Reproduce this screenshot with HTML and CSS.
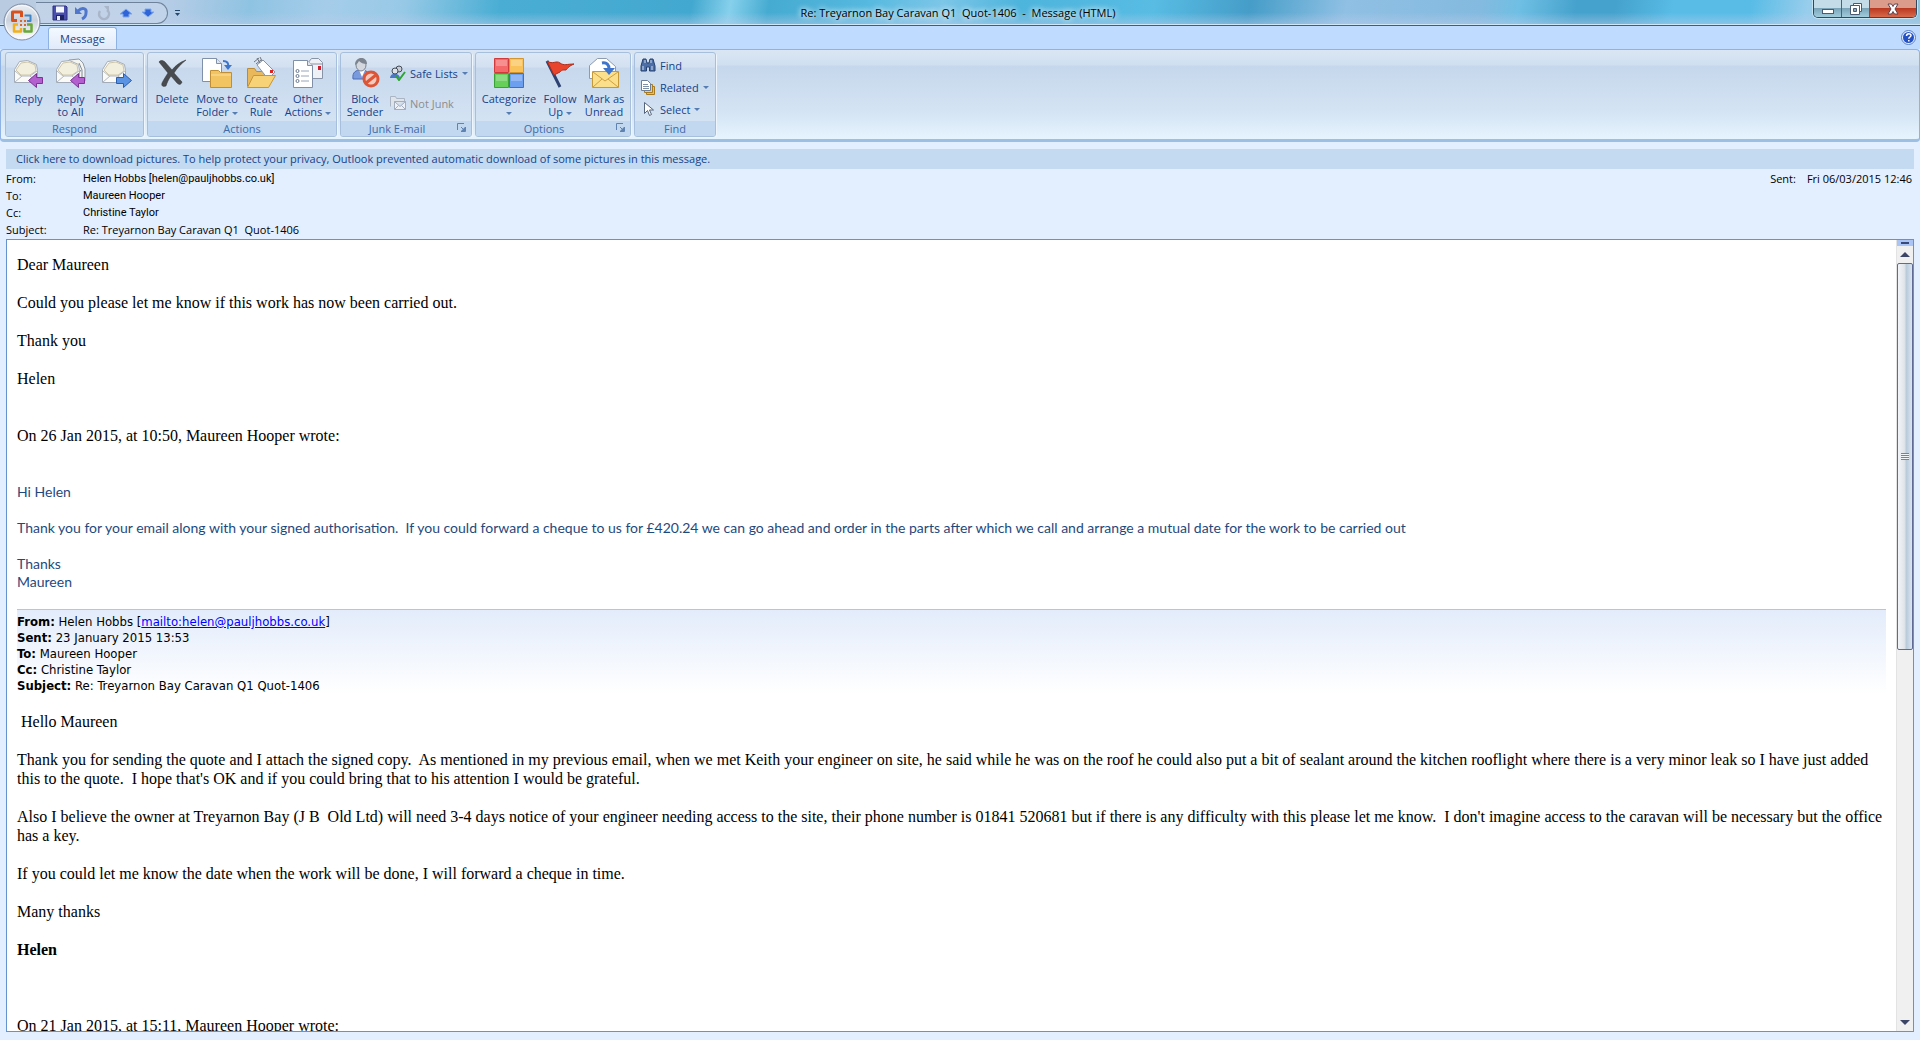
FILE: index.html
```html
<!DOCTYPE html>
<html lang="en">

	<head>
		<meta charset="UTF-8">
		<title>Re: Treyarnon Bay Caravan Q1 Quot-1406 - Message (HTML)</title>
		<link rel="stylesheet" href="styles.css">
	</head>

	<body>
		<header class="titlebar">
			<div class="quick">
				<button aria-label="Save"><svg width="16" height="16" viewBox="0 0 16 16"><path d="M1 1h13l1 1v13H1z" fill="#4a4fae" stroke="#2d3180"/><path d="M4 1.500h8v6H4z" fill="#f4f7ff"/><path d="M4 10h8v5H4z" fill="#1f2460"/><path d="M5 11h3v4H5z" fill="#e6eaff"/></svg></button>
				<button aria-label="Undo"><svg width="16" height="16" viewBox="0 0 16 16"><path d="M4 6c4-4 9-3 8 2 0 3-2 5-4 6" fill="none" stroke="#4f76cc" stroke-width="3"/><path d="M1 2v7h7z" fill="#4f76cc"/></svg></button>
				<button aria-label="Redo" disabled><svg width="16" height="16" viewBox="0 0 16 16"><path d="M11 5a5 5 0 1 1-7 1" fill="none" stroke="#a9b5c8" stroke-width="2.500"/><path d="M8 1h5v6z" fill="#a9b5c8"/></svg></button>
				<button aria-label="Previous Item"><svg width="16" height="16" viewBox="0 0 16 16"><path d="M8 4l6 5h-3v3H5V9H2z" fill="#2f63d8" stroke="#7ea8ee"/></svg></button>
				<button aria-label="Next Item"><svg width="16" height="16" viewBox="0 0 16 16"><path d="M8 12l6-5h-3V4H5v3H2z" fill="#2f63d8" stroke="#7ea8ee"/></svg></button>
			</div>
			<button class="customize" aria-label="Customize Quick Access Toolbar"><svg width="7" height="8" viewBox="0 0 7 8"><path d="M1 1.500h5" stroke="#25476e"/><path d="M1 4h5L3.500 7z" fill="#25476e"/></svg></button>
			<h1>Re: Treyarnon Bay Caravan Q1&nbsp; Quot-1406 &nbsp;-&nbsp; Message (HTML)</h1>
			<div class="window-btns">
				<button aria-label="Minimize"><svg width="14" height="14" viewBox="0 0 14 14"><rect x="1.500" y="7.500" width="11" height="4" fill="#fff" stroke="#4a5a70"/></svg></button>
				<button aria-label="Restore"><svg width="14" height="14" viewBox="0 0 14 14"><path d="M4.500 1.500h8v8h-8z" fill="#fff" stroke="#4a5a70"/><path d="M1.500 3.500h9v9h-9z" fill="#fff" stroke="#4a5a70"/><path d="M4.500 6.500h3v3h-3z" fill="#8fa9bd" stroke="#4a5a70"/></svg></button>
				<button class="close" aria-label="Close"><svg width="14" height="14" viewBox="0 0 14 14"><path d="M2 2h3.500L7 4.500 8.500 2H12L9 7l3 5H8.500L7 9.500 5.500 12H2l3-5z" fill="#fff" stroke="#5b4450"/></svg></button>
			</div>
			<button class="office" aria-label="Office Button"><svg width="38" height="38" viewBox="0 0 38 38">
				<defs>
					<linearGradient id="orb" x1="0" y1="0" x2="0" y2="1"><stop offset="0" stop-color="#eef1f5"/><stop offset=".45" stop-color="#c9d1dd"/><stop offset=".55" stop-color="#d5dbe4"/><stop offset="1" stop-color="#fff"/></linearGradient>
				</defs>
				<circle cx="19" cy="19" r="18" fill="url(#orb)" stroke="#7d8ba3"/>
				<circle cx="19" cy="19" r="16.500" fill="none" stroke="#f7f9fc"/>
				<g fill="none" stroke-width="3" stroke-linejoin="round">
					<path d="M14 17.500H9.500v-8.500h9v5" stroke="#d8501c"/>
					<path d="M21.500 12.500h6v5.500H24" stroke="#3f86c8" stroke-width="2"/>
					<path d="M18 25v3.500H11V21.500h4" stroke="#f2b01e" stroke-width="2.500"/>
					<path d="M21.500 25v3.500h7v-7H24" stroke="#6aa83a" stroke-width="2.500"/>
				</g>
				<path d="M17 17h2v2h-2zM21 17h2v2h-2zM17 21h2v2h-2zM21 21h2v2h-2z" fill="#d46a2c"/>
			</svg></button>
		</header>

		<nav class="tabs">
			<a href="#" class="tab">Message</a>
			<button class="help" aria-label="Help"><svg width="15" height="15" viewBox="0 0 15 15"><circle cx="7.500" cy="7.500" r="7" fill="#e8f1ff" stroke="#5a7fc0"/><circle cx="7.500" cy="7.500" r="5.500" fill="#2452c4"/><path d="M5.500 6c0-3 4.500-3 4.500-.5 0 1.500-2.200 1.500-2.200 3.200M7.800 10v1.500" fill="none" stroke="#fff" stroke-width="1.500"/></svg></button>
		</nav>

		<div class="ribbon">
			<section class="group respond">
				<div class="tools">
					<button class="big"><svg width="32" height="32" viewBox="0 0 32 32"><use href="#env"/><use href="#back"/></svg>Reply</button>
					<button class="big"><svg width="32" height="32" viewBox="0 0 32 32"><path d="M8 9l6-6 10-1 4 4 2 6v12l-4 2-12-3z" fill="#f4f4f0" stroke="#8f9aa8"/><path d="M24 6l3 7v10M26 13l-3 4" fill="none" stroke="#7f8a98"/><use href="#env"/><use href="#back"/></svg>Reply<br>to All</button>
					<button class="big"><svg width="32" height="32" viewBox="0 0 32 32"><use href="#env"/><path d="M15.500 20.500h7v-4l8 7-8 7v-4h-7z" fill="#5b93e4" stroke="#2a5cae"/></svg>Forward</button>
				</div>
				<h2>Respond</h2>
			</section>
			<section class="group actions">
				<div class="tools">
					<button class="big"><svg width="32" height="32" viewBox="0 0 32 32"><path d="M3 5c1-2 4-2 6 0l7 8c4-5 8-8 14-10-5 4-9 8-12 13l8 9c-1 3-3 3-5 1l-6-7c-3 4-4 7-5 10-3 1-5 0-4-3 2-4 4-7 6-10z" fill="#484b4f" stroke="#2e3033" stroke-width=".5"/></svg>Delete</button>
					<button class="big"><svg width="32" height="32" viewBox="0 0 32 32"><path d="M1.500 1.500h14l5 5v18h-19z" fill="#fff" stroke="#7f90a8"/><path d="M15.500 1.500v5h5" fill="#dfe6f0" stroke="#7f90a8"/><path d="M9.500 13.500h8l2 2h11v15h-21z" fill="#f3c462" stroke="#c08e35"/><path d="M10 18h20" stroke="#fbe0a0"/><path d="M22 4c4 0 6 2 5 6" fill="none" stroke="#3d74cc" stroke-width="2"/><path d="M23 8h8l-4 5z" fill="#3d74cc"/></svg><span>Move to<br>Folder <i class="arrow"></i></span></button>
					<button class="big"><svg width="32" height="32" viewBox="0 0 32 32"><path d="M2.500 29.500v-18h7l2 3h14v5" fill="#e8b85a" stroke="#b98b38"/><path d="M12 8l6-5 12 12-7 7z" fill="#fff" stroke="#8a93a3"/><path d="M9 5l5-4M11 7l5-4M12 1l3 5M15 0l2 4" stroke="#6e7580"/><path d="M25 13h3v3h-3z" fill="#d22"/><path d="M2.500 30.500l6-12h22l-7 12z" fill="#f8d277" stroke="#c59538"/></svg>Create<br>Rule</button>
					<button class="big"><svg width="32" height="32" viewBox="0 0 32 32"><path d="M15.500 6.500l4-5h7l4 4v16h-15z" fill="#eef1f6" stroke="#8793a6"/><path d="M15 7h16" stroke="#8793a6"/><path d="M26 9h3v4h-3z" fill="#d01c2c"/><path d="M1.500 3.500h14l5 5v22h-19z" fill="#fff" stroke="#7f90a8"/><path d="M15.500 3.500v5h5" fill="#dde4ee" stroke="#7f90a8"/><path d="M9 14h8M9 19h8M9 24h8" stroke="#9aa6b8"/><g fill="#fff" stroke="#68788f"><circle cx="5.500" cy="14" r="1.500"/><circle cx="5.500" cy="19" r="1.500"/><circle cx="5.500" cy="24" r="1.500"/></g></svg><span>Other<br>Actions <i class="arrow"></i></span></button>
				</div>
				<h2>Actions</h2>
			</section>
			<section class="group junk">
				<div class="tools">
					<button class="big"><svg width="32" height="32" viewBox="0 0 32 32"><path d="M4 22c-1-7 3-9 8-9s9 2 9 9z" fill="#7a9ade" stroke="#4c6cb8"/><path d="M10 13l3 7 3-7z" fill="#fff"/><ellipse cx="12" cy="8" rx="5" ry="6" fill="#d4d8de" stroke="#7a828d"/><path d="M6 8c0-9 12-9 12-1-4 0-6-1-8-3-1 2-2 3-4 4z" fill="#7c848f"/><circle cx="22" cy="22" r="7" fill="#f6c9bd" stroke="#dc5536" stroke-width="3"/><path d="M17 26l10-8" stroke="#dc5536" stroke-width="3"/></svg>Block<br>Sender</button>
					<div class="list">
						<button><svg width="16" height="16" viewBox="0 0 16 16"><path d="M0 13c0-5 9-6 10 0z" fill="#4c78c8"/><circle cx="9" cy="4" r="3" fill="#c9ced6" stroke="#444c58"/><circle cx="5" cy="6" r="3" fill="#dde2e8" stroke="#444c58"/><path d="M6 11l3 4 6-8" fill="none" stroke="#2fa336" stroke-width="2"/></svg>Safe Lists <i class="arrow"></i></button>
						<button disabled><svg width="16" height="16" viewBox="0 0 16 16"><path d="M.5 11.500v-10h5l1 2h8v3" fill="#dfe4ea" stroke="#aab4c2"/><path d="M4.500 6.500h11v8h-11zM4.500 6.500l5.500 5 5.500-5M4.500 14.500l4-4M15.500 14.500l-4-4" fill="#eef1f5" stroke="#a3adbb"/></svg>Not Junk</button>
					</div>
				</div>
				<h2>Junk E-mail<button class="launch" aria-label="Junk E-mail Options"><svg width="9" height="9" viewBox="0 0 9 9"><use href="#corner"/></svg></button></h2>
			</section>
			<section class="group options">
				<div class="tools">
					<button class="big"><svg width="32" height="32" viewBox="0 0 32 32"><path d="M1.500 1.500h14v14h-14z" fill="#f4686a" stroke="#cf3a3c"/><path d="M16.500 1.500h14v14h-14z" fill="#fac25a" stroke="#d29530"/><path d="M1.500 16.500h14v14h-14z" fill="#66cf5a" stroke="#39a136"/><path d="M16.500 16.500h14v14h-14z" fill="#6d9ff0" stroke="#3c6fcb"/><path d="M3 6h11M18 6h11M3 21h11M18 21h11" stroke="#fff" stroke-opacity=".25" stroke-width="6"/></svg><span>Categorize<br><i class="arrow"></i></span></button>
					<button class="big"><svg width="32" height="32" viewBox="0 0 32 32"><path d="M3 4l13 26" stroke="#2d4272" stroke-width="3"/><path d="M3 4c6 4 9-1 13 2 4 3 7 1 14 1-5 2-6 4-8 6-4 0-4 0-6 2-2 1-4 2-6 3z" fill="#e8452c" stroke="#b02c1a"/></svg><span>Follow<br>Up <i class="arrow"></i></span></button>
					<button class="big"><svg width="32" height="32" viewBox="0 0 32 32"><path d="M1.500 21.500v-13l8-7h9l9 8v12z" fill="#fff" stroke="#8d9bb0"/><path d="M4.500 14.500h26v16h-26z" fill="#fbdf8a" stroke="#c5993a"/><path d="M5 15l12 9 13-9M5 30l9-8M30 30l-10-8" fill="none" stroke="#cda044"/><path d="M14 6c5-1 7 2 7 6" fill="none" stroke="#3f74cc" stroke-width="3"/><path d="M15 11h12l-6 7z" fill="#3f74cc"/></svg>Mark as<br>Unread</button>
				</div>
				<h2>Options<button class="launch" aria-label="Message Options"><svg width="9" height="9" viewBox="0 0 9 9"><use href="#corner"/></svg></button></h2>
			</section>
			<section class="group find">
				<div class="list">
					<button><svg width="16" height="16" viewBox="0 0 16 16"><path d="M3 2h3l1 4h2l1-4h3l2 7v5H9.500v-4h-3v4H1V9z" fill="#4c6ea6" stroke="#24406f"/><path d="M3 9v4M12 9v4M5 3v3M11 3v3" stroke="#cddcf2"/></svg>Find</button>
					<button><svg width="16" height="16" viewBox="0 0 16 16"><path d="M6.500 7.500h8v8h-8z" fill="#f0bf4e" stroke="#a87a20"/><path d="M4.500 5.500h8v8h-8z" fill="#f6d070" stroke="#a87a20"/><path d="M1.500 1.500h6l3 3v7h-9z" fill="#fff" stroke="#6f7f98"/><path d="M3 5.500h5M3 7.500h6M3 9.500h6" stroke="#7f8fa8"/></svg>Related <i class="arrow"></i></button>
					<button><svg width="16" height="16" viewBox="0 0 16 16"><path d="M4.500 1.500v11l3-3 2 5 2-1-2-4.500h4z" fill="#fff" stroke="#56657c"/></svg>Select <i class="arrow"></i></button>
				</div>
				<h2>Find</h2>
			</section>
		</div>

		<main>
			<button class="infobar">Click here to download pictures. To help protect your privacy, Outlook prevented automatic download of some pictures in this message.</button>
			<div class="headers">
				<dl>
					<dt>From:</dt><dd class="person">Helen Hobbs [helen@pauljhobbs.co.uk]</dd>
					<dt>To:</dt><dd class="person">Maureen Hooper</dd>
					<dt>Cc:</dt><dd class="person">Christine Taylor</dd>
					<dt>Subject:</dt><dd>Re: Treyarnon Bay Caravan Q1&nbsp; Quot-1406</dd>
				</dl>
				<p class="sent"><span>Sent:</span><span>Fri 06/03/2015 12:46</span></p>
			</div>
			<div class="message">
				<article>
					<p>Dear Maureen</p>
					<p>Could you please let me know if this work has now been carried out.</p>
					<p>Thank you</p>
					<p>Helen</p>
					<br>
					<p>On 26 Jan 2015, at 10:50, Maureen Hooper wrote:</p>
					<br>
					<div class="reply">
						<p>Hi Helen</p>
						<p>Thank you for your email along with your signed authorisation.&nbsp; If you could forward a cheque to us for £420.24 we can go ahead and order in the parts after which we call and arrange a mutual date for the work to be carried out</p>
						<p>Thanks<br>Maureen</p>
					</div>
					<div class="quoted">
						<b>From:</b> Helen Hobbs [<a href="mailto:helen@pauljhobbs.co.uk">mailto:helen@pauljhobbs.co.uk</a>]<br>
						<b>Sent:</b> 23 January 2015 13:53<br>
						<b>To:</b> Maureen Hooper<br>
						<b>Cc:</b> Christine Taylor<br>
						<b>Subject:</b> Re: Treyarnon Bay Caravan Q1 Quot-1406
					</div>
					<p>&nbsp;Hello Maureen</p>
					<p>Thank you for sending the quote and I attach the signed copy.&nbsp; As mentioned in my previous email, when we met Keith your engineer on site, he said while he was on the roof he could also put a bit of sealant around the kitchen rooflight where there is a very minor leak so I have just added this to the quote.&nbsp; I hope that's OK and if you could bring that to his attention I would be grateful.</p>
					<p>Also I believe the owner at Treyarnon Bay (J B&nbsp; Old Ltd) will need 3-4 days notice of your engineer needing access to the site, their phone number is 01841 520681 but if there is any difficulty with this please let me know.&nbsp; I don't imagine access to the caravan will be necessary but the office has a key.</p>
					<p>If you could let me know the date when the work will be done, I will forward a cheque in time.</p>
					<p>Many thanks</p>
					<p><b>Helen</b></p>
					<br>
					<br>
					<p>On 21 Jan 2015, at 15:11, Maureen Hooper wrote:</p>
				</article>
				<div class="scrollbar">
					<div class="split"></div>
					<button class="up" aria-label="Scroll up"></button>
					<div class="track"><div class="thumb"></div></div>
					<button class="down" aria-label="Scroll down"></button>
				</div>
			</div>
		</main>

		<svg width="0" height="0" class="shapes">
			<symbol id="env" viewBox="0 0 32 32"><path d="M1.500 25.500v-13l5-8 8-1 9 4 1 6v12z" fill="#fafaf7" stroke="#a3acb8"/><path d="M3 13l5-7 7-1 7 3 1 6-6 4H8z" fill="#f3efde" stroke="#cdc6ac"/><path d="M2 14l6 5h9l7-5M2 25l7-6M24 25l-7-6" fill="none" stroke="#b2bac5"/></symbol>
			<symbol id="back" viewBox="0 0 32 32"><path d="M29.500 20.500h-6v-4l-8 7 8 7v-4h6z" fill="#b45fd0" stroke="#7c3296"/></symbol>
			<symbol id="corner" viewBox="0 0 9 9"><path d="M.5 7V.5H7M8.500 4v4.500H4M4 4l4 4" fill="none" stroke="#5f82b0"/><path d="M4 8h4V4z" fill="#5f82b0"/></symbol>
		</svg>
	</body>

</html>
```
FILE: styles.css
```css
* {
	margin: 0;
	padding: 0;
	box-sizing: border-box;
}

body {
	height: 100vh;
	display: flex;
	flex-direction: column;
	overflow: hidden;
	background: #e3eefe;
	font-family: "Open Sans", "Noto Sans", sans-serif;
	font-size: 11px;
	color: #000;
}

button {
	border: 0;
	background: none;
	font: inherit;
	color: inherit;
}

svg {
	display: block;
	flex: none;
}

.shapes {
	position: absolute;
}

/* title bar */
.titlebar {
	position: relative;
	display: flex;
	align-items: center;
	height: 26px;
	border-bottom: 1px solid #3f5d7c;
	box-shadow: inset 0 -1px #cfe6f5;
	background:
		linear-gradient(rgba(255, 255, 255, 0) 50%, rgba(190, 205, 235, .5)),
		linear-gradient(100deg, #b9cbe0 0, #b4cce6 9%, #8fc3e2 13%, #a5cdea 17%, #97c9e6 21%, #4aaed4 26%, #43a8cf 36%, #86d0ec 38%, #46abd1 40%, #55b9df 45%, #7cc6e8 49%, #4db4dc 53%, #58bce3 60%, #459dc8 65%, #90c0e4 70%, #84badf 77%, #6fbfe4 79%, #45a2cc 82%, #45a2cc 84%, #58bce6 87%, #58bce6 91%, #98cdec 94%, #8bc3dd 100%);
}

.quick {
	display: flex;
	align-items: center;
	gap: 6px;
	height: 22px;
	margin-left: 36px;
	padding: 0 11px 0 16px;
	border: 1px solid #6e8299;
	border-left: 0;
	border-radius: 0 11px 11px 0;
	background: rgba(200, 215, 235, .6);
}

.customize {
	margin-left: 6px;
}

h1 {
	flex: 1;
	padding-right: 78px;
	text-align: center;
	font-size: 11px;
	font-weight: normal;
	line-height: 26px;
	text-shadow: 0 0 6px #fff, 0 0 6px #fff;
}

.window-btns {
	display: flex;
	align-self: flex-start;
	height: 18px;
	margin-right: 3px;
	border: 1px solid #33475c;
	border-top: 0;
	border-radius: 0 0 5px 5px;
	overflow: hidden;
	box-shadow: 0 0 0 1px #c5e2f0;
}

.window-btns button {
	display: flex;
	align-items: center;
	justify-content: center;
	width: 28px;
	border-right: 1px solid #4b6175;
	background: linear-gradient(#c3dce8 45%, #7ba4b9 50%, #a0ccdd);
}

.window-btns .close {
	width: 46px;
	border: 0;
	background: linear-gradient(#dc9c8c 45%, #b93a21 50%, #d8694a);
}

.office {
	position: absolute;
	left: 3px;
	top: 3px;
}

/* tabs */
.tabs {
	display: flex;
	justify-content: space-between;
	align-items: flex-end;
	height: 23px;
	padding: 0 4px 0 48px;
	background: #bfdbff;
}

.tab {
	height: 22px;
	padding: 0 11px;
	border: 1px solid #8db2e3;
	border-bottom: 0;
	border-radius: 3px 3px 0 0;
	background: linear-gradient(#f4f9ff, #e0eafa);
	color: #15428b;
	line-height: 22px;
	text-decoration: none;
}

.help {
	margin-bottom: 4px;
}

/* ribbon */
.ribbon {
	display: flex;
	gap: 3px;
	height: 93px;
	padding: 2px 4px;
	border: 1px solid #8db2e3;
	border-bottom: 3px solid #9dbfe3;
	border-radius: 4px;
	background: linear-gradient(#dbe6f4, #cfdff0 17%, #c5d7ec 18%, #d5e4f4 70%, #e5f4fd);
}

.group {
	display: flex;
	flex-direction: column;
	justify-content: space-between;
	border: 1px solid #a5bfdd;
	border-radius: 3px;
	box-shadow: 1px 1px #eef5fc;
	background: linear-gradient(#dde8f5, #d2e0f1 17%, #c7d8ed 18%, #d8e6f5);
	color: #15428b;
	overflow: hidden;
}

.tools {
	display: grid;
	padding: 0 2px;
}

.respond .tools {
	grid-template-columns: 41px 43px 49px;
}

.actions .tools {
	grid-template-columns: 44px 46px 42px 52px;
}

.junk .tools {
	grid-template-columns: 44px 82px;
}

.options .tools {
	grid-template-columns: 62px 40px 48px;
}

.big {
	display: flex;
	flex-direction: column;
	align-items: center;
	padding-top: 4px;
	line-height: 13px;
	white-space: nowrap;
}

.big svg {
	margin-bottom: 3px;
}

.arrow {
	display: inline-block;
	border: 3px solid transparent;
	border-top-color: #567db1;
	border-bottom: 0;
	vertical-align: middle;
}

.list {
	display: flex;
	flex-direction: column;
	justify-content: space-between;
	padding: 4px 5px;
}

.junk .list {
	justify-content: flex-start;
	gap: 14px;
	padding: 12px 3px 0;
}

.find {
	width: 82px;
}

.find .list {
	flex: 1;
}

.list button {
	display: flex;
	align-items: center;
	gap: 4px;
	height: 16px;
	white-space: nowrap;
}

.list button:disabled {
	color: #8d8d8d;
}

.group h2 {
	position: relative;
	height: 15px;
	background: #c1d8f0;
	color: #3e6aaa;
	font-size: 11px;
	font-weight: normal;
	line-height: 15px;
	text-align: center;
}

.launch {
	position: absolute;
	right: 5px;
	top: 2px;
}

.junk h2,
.options h2 {
	padding-right: 18px;
}

/* message header */
main {
	flex: 1;
	min-height: 0;
	display: flex;
	flex-direction: column;
	padding: 7px 6px 8px;
}

.infobar {
	height: 20px;
	padding: 0 10px;
	background: #c4daf0;
	color: #15428b;
	line-height: 20px;
	text-align: left;
}

.headers {
	display: flex;
	justify-content: space-between;
	padding: 1px 2px 1px 0;
	line-height: 17px;
}

.headers dl {
	display: grid;
	grid-template-columns: 77px auto;
}

.person {
	font-family: Roboto, sans-serif;
}

.sent {
	display: flex;
	gap: 11px;
}

/* message body */
.message {
	flex: 1;
	min-height: 0;
	display: flex;
	border: 1px solid #6593cf;
	background: #fff;
}

article {
	flex: 1;
	padding: 15px 10px 0;
	overflow: hidden;
	font: 16px/19px "Liberation Serif", serif;
}

article p {
	margin-bottom: 19px;
}

.reply {
	color: #1f497d;
	font: 14px/18px Lato, sans-serif;
}

.reply p {
	margin-bottom: 18px;
}

.quoted {
	margin-bottom: 18px;
	padding-top: 4px;
	border-top: 1px solid #b5c4df;
	background: linear-gradient(#e3ecfb, #fff);
	font: 13px/16px "DejaVu Sans Condensed", "DejaVu Sans", sans-serif;
}

.quoted a {
	color: #00f;
}

.scrollbar {
	display: flex;
	flex-direction: column;
	width: 17px;
	background: #f0f0f0;
	border-left: 1px solid #e3e3e3;
}

.split {
	height: 6px;
	border: 2px solid #a9c4f5;
	border-width: 2px 4px;
	background: #3a4a78;
}

.up,
.down {
	display: flex;
	align-items: center;
	justify-content: center;
	height: 17px;
}

.up::after,
.down::after {
	content: "";
	border: 5px solid transparent;
	border-top: 0;
	border-bottom-color: #3c4566;
}

.down::after {
	transform: rotate(180deg);
}

.track {
	flex: 1;
}

.thumb {
	display: flex;
	align-items: center;
	justify-content: center;
	height: 387px;
	border: 1px solid #5f6b94;
	border-radius: 2px;
	background: linear-gradient(90deg, #f2f5f8, #e1e5ea 45%, #b9cadb 60%, #dbe5f0);
}

.thumb::after {
	content: "";
	width: 8px;
	height: 7px;
	background: repeating-linear-gradient(#7b8291 0 1px, #f2f5f8 1px 2px);
}
```
